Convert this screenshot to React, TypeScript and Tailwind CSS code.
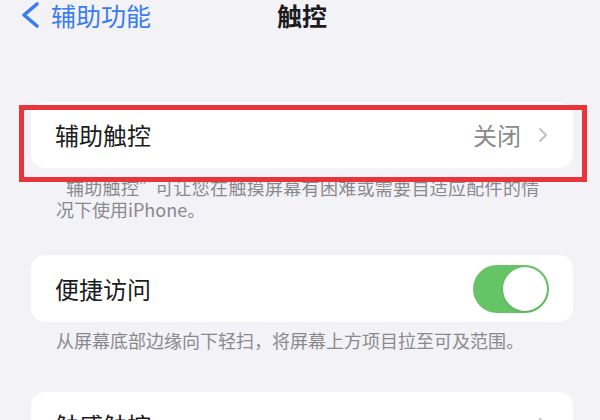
import React from "react";

function RowChevron() {
  return (
    <svg width="10" height="16" viewBox="0 0 10 16" fill="none">
      <path d="M2 2 L8 8 L2 14" stroke="#c4c4c8" strokeWidth="2.2" strokeLinecap="round" strokeLinejoin="round" />
    </svg>
  );
}

export default function App() {
  return (
    <div className="relative w-[600px] h-[420px] overflow-hidden bg-[#f2f2f7] font-['Noto_Sans_CJK_SC','Noto_Sans',sans-serif] text-[#1c1c1e]">
      {/* nav bar */}
      <div className="grid grid-cols-[1fr_auto_1fr] items-center h-[30px]">
        <div className="flex items-center pl-[20px] gap-[11px] text-[#3a7cf0]">
          <svg width="20" height="28" viewBox="0 0 20 28" fill="none">
            <path d="M17 3 L4 14 L17 25" stroke="#3a7cf0" strokeWidth="3.6" strokeLinecap="round" strokeLinejoin="round" />
          </svg>
          <span className="text-[25px] leading-none">辅助功能</span>
        </div>
        <div className="text-[25px] leading-none font-bold pl-[4px]">触控</div>
        <div />
      </div>

      {/* section 1 */}
      <div className="mt-[72px] ml-[31px] mr-[27px] h-[66px] bg-white rounded-[14px] flex items-center justify-between pl-[24px] pr-[25px]">
        <span className="text-[24px] leading-none">辅助触控</span>
        <div className="flex items-center gap-[17px]">
          <span className="text-[24px] leading-none text-[#8a8a8e]">关闭</span>
          <RowChevron />
        </div>
      </div>
      <div className="mt-[8px] pl-[56px] pr-[20px] text-[18px] leading-[22px] text-[#8a8a8e]">
        <div className="whitespace-nowrap tracking-[0.3px]">
          <span className="inline-block w-[10px] text-right">“</span>辅助触控<span className="inline-block w-[16px] text-left">”</span>可让您在触摸屏幕有困难或需要自适应配件的情
        </div>
        <div>况下使用iPhone。</div>
      </div>

      {/* section 2 */}
      <div className="mt-[35px] ml-[31px] mr-[27px] h-[67px] bg-white rounded-[14px] flex items-center justify-between pl-[24px] pr-[24px]">
        <span className="text-[24px] leading-none">便捷访问</span>
        <div className="w-[76px] h-[48px] rounded-full bg-[#65c466] p-[2px] flex items-center justify-end">
          <div className="w-[44px] h-[44px] rounded-full bg-white shadow-[0_1px_3px_rgba(0,0,0,0.15)]" />
        </div>
      </div>
      <div className="mt-[7px] pl-[56px] text-[18px] leading-[22px] text-[#8a8a8e]">
        从屏幕底部边缘向下轻扫，将屏幕上方项目拉至可及范围。
      </div>

      {/* section 3 */}
      <div className="mt-[41px] ml-[31px] mr-[27px] h-[66px] bg-white rounded-[14px] flex items-center justify-between pl-[24px] pr-[25px]">
        <span className="text-[24px] leading-none">触感触控</span>
        <RowChevron />
      </div>

      {/* red annotation box */}
      <div className="absolute left-[19px] top-[105px] w-[568px] h-[77px] border-[5px] border-[#e8343b]" />
    </div>
  );
}
